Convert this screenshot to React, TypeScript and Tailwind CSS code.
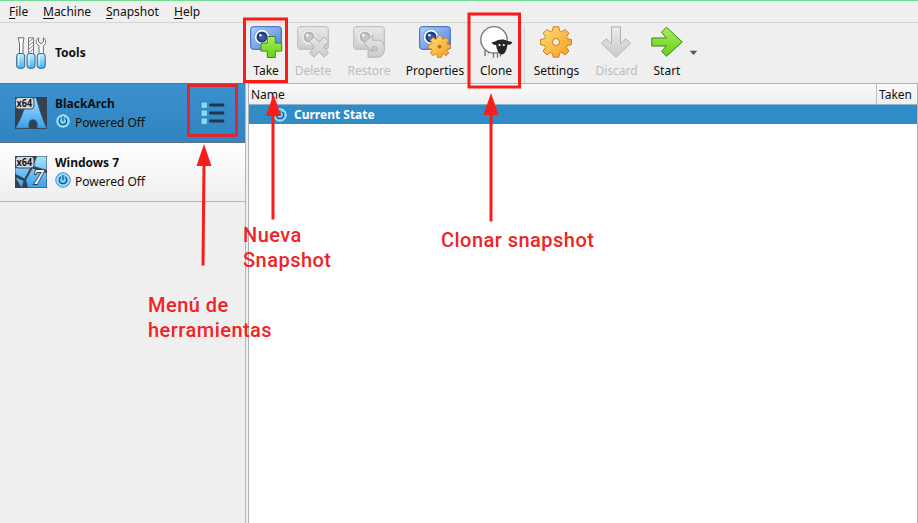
import React from "react";

function Defs() {
  return (
    <svg width="0" height="0" className="absolute">
      <defs>
        <linearGradient id="blue" x1="0" y1="0" x2="1" y2="1">
          <stop offset="0" stopColor="#aad2ff" />
          <stop offset="1" stopColor="#4a80de" />
        </linearGradient>
        <linearGradient id="green" x1="0" y1="0" x2="0" y2="1">
          <stop offset="0" stopColor="#a9ee58" />
          <stop offset="1" stopColor="#66d018" />
        </linearGradient>
        <linearGradient id="orange" x1="0" y1="0" x2="1" y2="1">
          <stop offset="0" stopColor="#ffe27c" />
          <stop offset="1" stopColor="#f59a1c" />
        </linearGradient>
        <linearGradient id="gray" x1="0" y1="0" x2="0" y2="1">
          <stop offset="0" stopColor="#e9e9e9" />
          <stop offset="1" stopColor="#cbcbcb" />
        </linearGradient>
        <linearGradient id="cyan" x1="0" y1="0" x2="0" y2="1">
          <stop offset="0" stopColor="#c4f0ff" />
          <stop offset="1" stopColor="#3fb2f5" />
        </linearGradient>
        <linearGradient id="sky" x1="0" y1="0" x2="0" y2="1">
          <stop offset="0" stopColor="#a4e2ff" />
          <stop offset="1" stopColor="#3a9fec" />
        </linearGradient>
      </defs>
    </svg>
  );
}

function Camera({ off = false }: { off?: boolean }) {
  return (
    <g>
      <rect x="0.7" y="0.7" width="30.6" height="22.6" rx="2.5" fill={off ? "url(#gray)" : "url(#blue)"} stroke={off ? "#b9b9b9" : "#3b5fb4"} />
      <circle cx="12" cy="11" r="8.3" fill={off ? "#dadada" : "#7fa6ea"} />
      <circle cx="12" cy="11" r="7.2" fill={off ? "#efefef" : "#fff"} />
      <circle cx="12" cy="11" r="5.5" fill={off ? "#b5b5b5" : "#203a83"} />
      <circle cx="12.4" cy="11.6" r="3.4" fill={off ? "#c6c6c6" : "#36599f"} />
      <circle cx="10.4" cy="9.2" r="1.3" fill="#fff" />
    </g>
  );
}

const GEAR =
  "M13.2 .8h5.6l.7 4.1 2.1.9 3.5-2.4 3.8 3.8-2.4 3.5.9 2.1 4 .7v5.2l-4 .8-.9 2.1 2.4 3.5-3.8 3.8-3.5-2.4-2.1.9-.7 3.8h-5.6l-.8-3.8-2.1-.9-3.4 2.4-3.8-3.8 2.4-3.5-.9-2.1-4-.8v-5.2l4-.7.9-2.1-2.4-3.5 3.8-3.8 3.4 2.4 2.1-.9z";

function Icon({ name }: { name: string }) {
  return (
    <svg width="33" height="33" viewBox="0 0 33 33" strokeLinejoin="round">
      {name === "Take" && (
        <>
          <Camera />
          <path d="M17.3 10.5h8v6.6h6.4v8h-6.4v6.4h-8v-6.4H11v-8h6.3z" fill="url(#green)" stroke="#438818" />
        </>
      )}
      {name === "Delete" && (
        <>
          <Camera off />
          <path d="M17 11l5 5.2 5-5.2 4.5 4.4-4.8 5.4 4.8 6.1-4.5 4.2-5-5.3-5 5.3-4.5-4.2 5-6-5-5.5z" fill="url(#gray)" stroke="#b2b2b2" />
        </>
      )}
      {name === "Restore" && (
        <>
          <Camera off />
          <path d="M19.5 9.5v4.7h5.2c9 0 9 17 0 17H15v-6.4h7.5c2.6 0 2.6-4 0-4h-3v4.7L10.800 17.300z" fill="url(#gray)" stroke="#b2b2b2" />
        </>
      )}
      {name === "Properties" && (
        <>
          <Camera />
          <g transform="translate(9.2 9.2) scale(.71)">
            <path d={GEAR} fill="url(#orange)" stroke="#cd8428" strokeWidth="1.4" />
            <circle cx="16" cy="16" r="2.6" fill="#b76a16" />
          </g>
        </>
      )}
      {name === "Clone" && (
        <>
          <path d="M5 23.500v6.500M8.500 25.500v2M13.500 27v4.700M17.500 27v4.700M20.500 24v6.500" stroke="#777" strokeWidth="1.400" fill="none" />
          <circle cx="14" cy="13.800" r="13.200" fill="#fff" stroke="#7b7b7b" strokeWidth="1.400" />
          <path d="M11.500 16.300c2.500.4 4-1.600 6.500-2.300 3-.8 6.500-.7 9 .7 1.800.9 3.500.7 5.300 1.500-.7 2-2.500 2.900-4.900 2.300-.3 4-2.100 10-5.700 10-3 0-5.200-5.200-5.600-9.700-2.200.4-4.100-.8-4.600-2.500z" fill="#252525" />
          <circle cx="19.500" cy="19" r="1.100" fill="#fff" />
          <circle cx="23.800" cy="19" r="1.100" fill="#fff" />
        </>
      )}
      {name === "Settings" && (
        <>
          <path d={GEAR} fill="url(#orange)" stroke="#cb7d25" />
          <circle cx="16" cy="16" r="3.5" fill="#f4eee3" stroke="#c97d24" />
        </>
      )}
      {name === "Discard" && <path d="M11.5.8h9v17l5.2-5 4.8 4.5L16 31.2 1.5 17.3l4.8-4.5 5.2 5z" fill="url(#gray)" stroke="#b0b0b0" />}
      {name === "Start" && <path d="M.8 12h14.5L10.6 6.2 15.5 1.2 31.3 16 15.5 30.2l-4.9-4.8L15.3 20H.8z" fill="url(#green)" stroke="#39831b" />}
    </svg>
  );
}

function Power() {
  return (
    <svg width="16" height="16" viewBox="0 0 16 16" className="shrink-0">
      <circle cx="8" cy="8" r="7.2" fill="#7fd2fa" stroke="#2d86c8" />
      <circle cx="8" cy="8" r="6.1" fill="none" stroke="#b4e8ff" strokeWidth=".8" />
      <path d="M5.7 5.1a3.700 3.700 0 1 0 4.600 0M8 3.500v4.300" fill="none" stroke="#135078" strokeWidth="1.200" strokeLinecap="round" />
    </svg>
  );
}

function Tools() {
  return (
    <svg width="31" height="33" viewBox="0 0 31 33" strokeLinejoin="round">
      <path d="M2 .8h6L7 6.2v10.5H3.5V6.2z" fill="#fff" stroke="#6b6b6b" />
      <path d="M12.5.8h5v15.9h-5z" fill="#fff" stroke="#777" />
      <path d="M12.7 5l4.6-3.7m-4.6 7.3 4.6-3.7m-4.6 7.3 4.6-3.7m-4.6 7.3 4.6-3.7" stroke="#888" />
      <path d="M22.600.8v4l2.400 2 2.400-2v-4c3 1.500 3 6 0 8v8h-4.400v-8c-3.700-2-3.700-6.500-.4-8z" fill="#fff" stroke="#6b6b6b" />
      {[0.7, 11, 21.2].map((x) => (
        <g key={x}>
          <rect x={x} y="16.5" width="8" height="14.8" rx="2.5" fill="url(#cyan)" stroke="#35668a" />
          <path d={`M${x + 2} 18.5v10`} stroke="#e4faff" />
        </g>
      ))}
    </svg>
  );
}

function OsIcon({ kind }: { kind: "arch" | "win" }) {
  return (
    <svg width="32" height="32" viewBox="0 0 32 32" className="shrink-0">
      <rect width="32" height="32" fill="#34424f" />
      {kind === "arch" ? (
        <path d="M12.500 1h8.500c2.500 9 5.500 19 10.500 30H22c.5-2 .5-4 0-5.500-1.500-4-7-4-8 0-.4 1.500-.4 3.500 0 5.500H.8C6 22 10 12 12.500 1z" fill="url(#sky)" stroke="#2a6da8" strokeWidth=".5" />
      ) : (
        <>
          <path d="M22 .5h9.500V14L18.500 10zM.5 12h14.800L9.500 22.500.5 18zM17.500 12.500 31.500 17v14.500H13l-2-7.500zM.5 21.500 8.500 25l-2 6.500z" fill="url(#sky)" />
          <text x="18.500" y="28" fontSize="20" fontWeight="700" fontStyle="italic" fill="#fff" stroke="#263d52" strokeWidth="1.800" paintOrder="stroke" fontFamily="Liberation Serif, serif">7</text>
        </>
      )}
      <rect x=".5" y=".5" width="18.500" height="11.500" rx="3" fill="#d4d9dc" stroke="#414b53" />
      <text x="1.600" y="10" fontSize="10" fontWeight="700" textLength="15.500" lengthAdjust="spacingAndGlyphs" fill="#141414" fontFamily="Noto Sans, sans-serif">x64</text>
    </svg>
  );
}

function Machine({ name, kind, selected = false }: { name: string; kind: "arch" | "win"; selected?: boolean }) {
  return (
    <div className={`flex h-[59px] shrink-0 border-b pt-[13px] pl-[15px] ${selected ? "border-[#5d7484] bg-linear-to-b from-[#3a91cf] to-[#3184bf]" : "border-[#b4b4b4] bg-linear-to-b from-white to-[#eeeeee]"}`}>
      <OsIcon kind={kind} />
      <div className="ml-2 flex w-[133px] flex-col">
        <b className="-mt-[1px] h-[16px] leading-[16px]">{name}</b>
        <div className="flex h-[18px] items-center gap-[4px]">
          <Power />
          <span className="mt-[3px] leading-[16px]">Powered Off</span>
        </div>
      </div>
      {selected && (
        <svg width="26" height="25" viewBox="0 0 26 25" className="mt-[4px] ml-[11px]">
          {[1, 9, 17].map((y) => (
            <g key={y}>
              <rect x="2" y={y} width="6.4" height="6.4" rx="1" fill="#85d9ff" stroke="#236898" strokeWidth=".6" />
              <path d={`M11.500 ${y + 3}h12.500`} stroke="#223747" strokeWidth="2.800" strokeLinecap="round" />
            </g>
          ))}
        </svg>
      )}
    </div>
  );
}

const ACTIONS = [
  ["Take", "w-[46px]"],
  ["Delete", "w-[48px] text-[#bcbcbc]"],
  ["Restore", "w-[64px] text-[#bcbcbc]"],
  ["Properties", "w-[68px]"],
  ["Clone", "w-[54px] mr-[1px]"],
  ["Settings", "w-[64px] border-l border-[#d5d5d5]"],
  ["Discard", "w-[57px] text-[#bcbcbc]"],
  ["Start", "w-[44px]"],
];

const NOTE = "absolute font-['Roboto',sans-serif] text-[20px] leading-[25px] font-medium tracking-[0.47px] text-[#ee2426]";

export default function App() {
  return (
    <div className="relative flex h-[523px] w-[918px] flex-col overflow-hidden bg-[#efefef] font-['Noto_Sans',sans-serif] text-[12px] text-[#101010]">
      <Defs />
      <nav className="flex h-[23px] shrink-0 border-t border-b border-t-[#70df91] border-b-[#d4d4d4] pt-[2px] pl-[9px] leading-[18px]">
        {[["File", "w-[34px]"], ["Machine", "w-[63px]"], ["Snapshot", "w-[68px]"], ["Help", "w-[40px]"]].map(([t, w]) => (
          <span key={t} className={w}>
            <span className="underline underline-offset-2">{t[0]}</span>
            {t.slice(1)}
          </span>
        ))}
      </nav>
      <div className="flex min-h-0 flex-1">
        <aside className="flex w-[246px] shrink-0 flex-col border-r border-[#b3b3b3]">
          <div className="flex h-[61px] shrink-0 items-start border-b border-[#5d7484] pt-[14px] pl-4">
            <Tools />
            <b className="ml-2 leading-[32px]">Tools</b>
          </div>
          <Machine name="BlackArch" kind="arch" selected />
          <Machine name="Windows 7" kind="win" />
        </aside>
        <main className="flex min-w-0 flex-1 flex-col">
          <div className="-ml-[3px] flex h-[60px] shrink-0 pt-[3px]">
            {ACTIONS.map(([name, style]) => (
              <div key={name} className={`flex shrink-0 flex-col items-center whitespace-nowrap ${style}`}>
                <Icon name={name} />
                <span className="mt-[4px] leading-[16px]">{name}</span>
              </div>
            ))}
            <svg width="9" height="6" viewBox="0 0 9 6" className="mt-[24px]">
              <path d="M.7.8h7.6L4.5 5z" fill="#555" />
            </svg>
          </div>
          <section className="ml-[2px] flex min-h-0 flex-1 flex-col border-t border-r border-l border-[#b0b0b0] bg-white">
            <div className="flex h-[21px] shrink-0 border-b border-[#8eb4cd] bg-linear-to-b from-[#fafafa] to-[#efefef] leading-[21px]">
              <span className="flex-1 pl-[2px]">Name</span>
              <span className="w-[41px] border-l border-[#bcbcbc] pl-[2px]">Taken</span>
            </div>
            <div className="flex h-[19px] shrink-0 items-center bg-[#308cc6] pl-[23px] text-white">
              <Power />
              <b className="ml-[6px]">Current State</b>
            </div>
          </section>
        </main>
      </div>
      <svg className="absolute inset-0" width="918" height="523" viewBox="0 0 918 523">
        <g fill="none" stroke="#fa1b1b" strokeWidth="3">
          <path d="M244.500 19h42v62.500h-42zM469 14h50.500v73h-50.500z" />
          <path d="M188.500 85.500h48v50h-48z" stroke="#df2732" />
          <path d="M273 115v104.500M491 112v109.500M204 162l-1 103.500" />
        </g>
        <path d="M273.500 94l7.500 22h-15zM491 93l7.500 22h-15zM204 144l7.500 22h-15z" fill="#fa1b1b" />
      </svg>
      <div className={`${NOTE} top-[223px] left-[243px]`}>Nueva<br />Snapshot</div>
      <div className={`${NOTE} top-[293px] left-[148px]`}>Menú de<br />herramientas</div>
      <div className={`${NOTE} top-[228px] left-[441px]`}>Clonar snapshot</div>
    </div>
  );
}
